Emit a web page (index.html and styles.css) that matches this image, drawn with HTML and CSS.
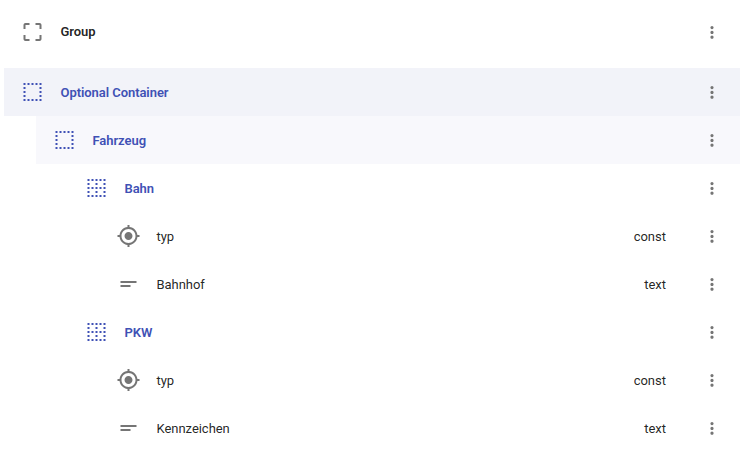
FILE: index.html
```html
<!DOCTYPE html>
<html lang="de">
<head>
<meta charset="utf-8">
<title>Schema</title>
<link rel="stylesheet" href="styles.css">
</head>
<body>
<svg class="defs" width="0" height="0">
  <symbol id="more" viewBox="-3 -3.500 30 30"><path d="M12 8c1.100 0 2-.9 2-2s-.9-2-2-2-2 .9-2 2 .9 2 2 2zm0 2c-1.100 0-2 .9-2 2s.9 2 2 2 2-.9 2-2-.9-2-2-2zm0 6c-1.100 0-2 .9-2 2s.9 2 2 2 2-.9 2-2-.9-2-2-2z"/></symbol>
  <symbol id="group" viewBox="-.5 0 24 24"><path d="M3 5v4h2V5h4V3H5c-1.100 0-2 .9-2 2zm2 10H3v4c0 1.100.9 2 2 2h4v-2H5v-4zm14 4h-4v2h4c1.100 0 2-.9 2-2v-4h-2v4zm0-16h-4v2h4v4h2V5c0-1.100-.9-2-2-2z"/></symbol>
  <symbol id="outer" viewBox="-.5 0 24 24"><path id="outer-dots" d="M3 3h2v2H3zM7 3h2v2H7zM11 3h2v2h-2zM15 3h2v2h-2zM19 3h2v2h-2zM3 7h2v2H3zM19 7h2v2h-2zM3 11h2v2H3zM19 11h2v2h-2zM3 15h2v2H3zM19 15h2v2h-2zM3 19h2v2H3zM7 19h2v2H7zM11 19h2v2h-2zM15 19h2v2h-2zM19 19h2v2h-2z"/></symbol>
  <symbol id="grid" viewBox="-.5 0 24 24"><use href="#outer-dots"/><path d="M11 7h2v2h-2zM7 11h2v2H7zM11 11h2v2h-2zM15 11h2v2h-2zM11 15h2v2h-2z"/></symbol>
  <symbol id="target" viewBox="-.5 0 24 24"><path d="M12 8c-2.210 0-4 1.790-4 4s1.790 4 4 4 4-1.790 4-4-1.790-4-4-4zm8.940 3c-.46-4.170-3.770-7.480-7.940-7.940V1h-2v2.060C6.830 3.520 3.520 6.830 3.060 11H1v2h2.060c.46 4.170 3.770 7.480 7.940 7.940V23h2v-2.060c4.170-.46 7.480-3.770 7.940-7.940H23v-2h-2.060zM12 19c-3.870 0-7-3.130-7-7s3.130-7 7-7 7 3.130 7 7-3.130 7-7 7z"/></symbol>
  <symbol id="short" viewBox="-.5 0 24 24"><path d="M4 9h16v2H4V9zm0 4h10v2H4v-2z"/></symbol>
</svg>
<main class="tree">
  <div class="row first"><svg class="icon"><use href="#group"/></svg><span class="name bold">Group</span><svg class="more"><use href="#more"/></svg></div>
  <div class="row container"><svg class="icon"><use href="#outer"/></svg><span class="name">Optional Container</span><svg class="more"><use href="#more"/></svg></div>
  <div class="row container level1"><svg class="icon"><use href="#outer"/></svg><span class="name">Fahrzeug</span><svg class="more"><use href="#more"/></svg></div>
  <div class="row container level2"><svg class="icon"><use href="#grid"/></svg><span class="name">Bahn</span><svg class="more"><use href="#more"/></svg></div>
  <div class="row level3"><svg class="icon"><use href="#target"/></svg><span class="name">typ</span><span class="type">const</span><svg class="more"><use href="#more"/></svg></div>
  <div class="row level3"><svg class="icon"><use href="#short"/></svg><span class="name">Bahnhof</span><span class="type">text</span><svg class="more"><use href="#more"/></svg></div>
  <div class="row container level2"><svg class="icon"><use href="#grid"/></svg><span class="name">PKW</span><svg class="more"><use href="#more"/></svg></div>
  <div class="row level3"><svg class="icon"><use href="#target"/></svg><span class="name">typ</span><span class="type">const</span><svg class="more"><use href="#more"/></svg></div>
  <div class="row level3"><svg class="icon"><use href="#short"/></svg><span class="name">Kennzeichen</span><span class="type">text</span><svg class="more"><use href="#more"/></svg></div>
</main>
</body>
</html>
```
FILE: styles.css
```css
body { margin: 0; background: #fff; color: rgba(0, 0, 0, .87); font: 13px/20px Roboto, sans-serif; overflow: hidden; }
.defs { position: absolute; }
.tree { padding: 8px 0 0 4px; }
.row { display: flex; align-items: center; box-sizing: border-box; height: 48px; padding: 0 16px; }
.first { margin-bottom: 12px; }
.level1 { margin-left: 32px; background: #f8f8fc; }
.level2 { margin-left: 64px; }
.level3 { margin-left: 96px; }
.container:not(.level1):not(.level2) { background: #f2f3f9; }
.icon { width: 24px; height: 24px; margin-right: 16.5px; fill: #757575; }
.name { flex: 1; letter-spacing: -.04px; }
.bold { font-weight: 600; }
.container .name { font-weight: 600; color: #3f51b5; letter-spacing: -.06px; }
.container .icon { fill: #3f51b5; }
.row:not(.first) .name, .type { padding-top: 2px; }
.type { margin-right: 34px; }
.more { width: 24px; height: 24px; fill: #757575; }
```
